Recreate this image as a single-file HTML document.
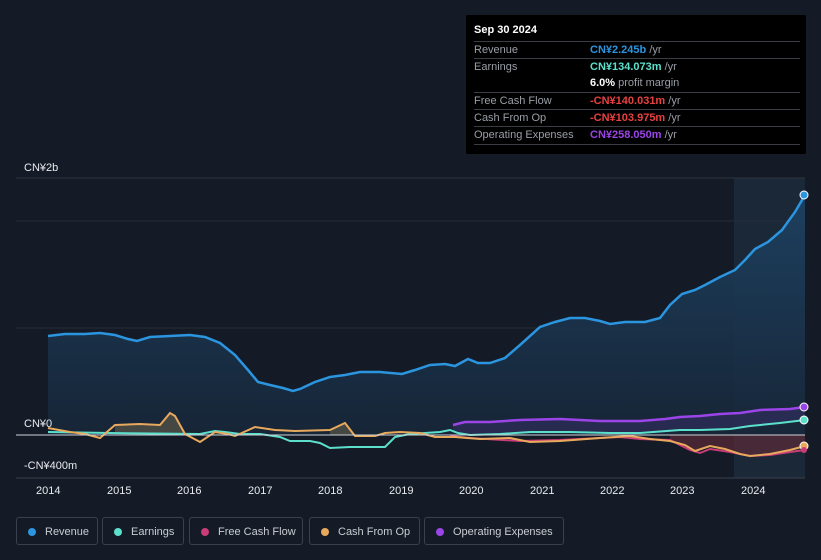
<!DOCTYPE html>
<html><head><meta charset="utf-8"><style>
body{margin:0;width:821px;height:560px;background:#151b26;font-family:"Liberation Sans","Noto Sans CJK SC",sans-serif;overflow:hidden;position:relative}
.tip{position:absolute;left:466px;top:15px;width:340px;height:139px;background:#000;border-radius:2px}
.tip .h{position:absolute;left:8px;top:9px;color:#fff;font-size:11px;font-weight:bold}
.row{position:absolute;left:8px;width:326px;border-top:1px solid #3a3d44;height:17px;font-size:11px;line-height:17px;color:#9a9ea6}
.row span{position:absolute;left:116px}
.leg{position:absolute;top:517px;height:28px;border:1px solid #3a404c;border-radius:3px;color:#c9ccd2;font-size:11px;line-height:28px;box-sizing:border-box;padding-left:28px}
.leg i{position:absolute;left:11px;top:10px;width:8px;height:8px;border-radius:50%}
.ax{position:absolute;color:#e8eaee;font-size:11px}
</style></head><body>
<svg width="821" height="560" style="position:absolute;left:0;top:0">
<defs><linearGradient id="g" x1="0" y1="0" x2="0" y2="1"><stop offset="0" stop-color="#1d4263"/><stop offset="1" stop-color="#172638"/></linearGradient></defs>
<rect x="734" y="178" width="71" height="300" fill="#1b2838"/>
<line x1="16" y1="178" x2="805" y2="178" stroke="#2e343f"/>
<line x1="16" y1="221" x2="805" y2="221" stroke="#262c37"/>
<line x1="16" y1="328" x2="805" y2="328" stroke="#262c37"/>
<path d="M48,336 L65,334 85,334 100,333 115,335 128,339 137,341 150,337 170,336 190,335 205,337 220,343 235,355 248,370 258,382 270,385 283,388 293,391 300,389 315,382 330,377 345,375 360,372 380,372 402,374 415,370 430,365 445,364 455,366 468,359 478,363 490,363 505,358 520,345 540,327 555,322 570,318 585,318 600,321 610,324 625,322 645,322 660,318 670,305 682,294 695,290 705,285 720,277 735,270 745,260 755,249 768,242 782,230 795,212 805,195 L805,435 L48,435Z" fill="url(#g)" opacity="0.9"/>
<path d="M48,336 L65,334 85,334 100,333 115,335 128,339 137,341 150,337 170,336 190,335 205,337 220,343 235,355 248,370 258,382 270,385 283,388 293,391 300,389 315,382 330,377 345,375 360,372 380,372 402,374 415,370 430,365 445,364 455,366 468,359 478,363 490,363 505,358 520,345 540,327 555,322 570,318 585,318 600,321 610,324 625,322 645,322 660,318 670,305 682,294 695,290 705,285 720,277 735,270 745,260 755,249 768,242 782,230 795,212 805,195" fill="none" stroke="#2b95e0" stroke-width="2.5"/>
<path d="M670,440 L685,445 695,451 710,446 725,449 740,454 750,456 770,454 790,450 805,446 L805,435 670,435Z" fill="#5a2a38" opacity="0.7"/>
<path d="M453,425 L465,422 490,422 520,420 560,419 600,421 640,421 665,419 680,417 700,416 720,414 740,413 760,410 790,409 805,407 L805,420 780,423 750,426 700,430 640,433 560,432 500,434 470,435 453,433Z" fill="#3a2f6a" opacity="0.5"/>
<path d="M115,425 L140,424 160,425 170,413 175,416 185,434 L115,434Z M330,430 L345,423 355,435 330,435Z" fill="#5a5548" opacity="0.7"/>
<path d="M453,425 L465,422 490,422 520,420 560,419 600,421 640,421 665,419 680,417 700,416 720,414 740,413 760,410 790,409 805,407" fill="none" stroke="#9b45e8" stroke-width="2.5"/>
<path d="M48,432 L110,433 200,434 215,431 225,432 240,434 260,434 280,437 290,441 310,441 320,443 330,448 350,447 385,447 395,437 410,434 440,432 450,430 458,433 470,435 500,434 530,432 570,432 610,433 640,433 680,430 700,430 730,429 750,426 780,423 805,420" fill="none" stroke="#5ce0cc" stroke-width="2"/>
<path d="M450,436 L470,438 520,441 560,440 580,439 620,437 640,439 670,440 690,450 700,453 710,449 730,452 750,456 770,455 790,452 805,450" fill="none" stroke="#c83c78" stroke-width="2"/>
<path d="M48,428 L70,432 85,434 100,438 115,425 140,424 160,425 170,413 175,416 185,434 200,442 215,432 228,434 235,436 255,427 275,430 295,431 330,430 345,423 355,436 375,436 385,433 400,432 420,433 435,437 455,437 480,439 510,438 530,442 560,441 600,438 630,436 650,439 670,441 685,445 695,451 710,446 725,449 740,454 750,456 770,454 790,450 805,446" fill="none" stroke="#e8a95c" stroke-width="2"/>
<line x1="16" y1="435" x2="805" y2="435" stroke="#d0d3d8" stroke-width="1"/>
<line x1="16" y1="478" x2="805" y2="478" stroke="#3a404c"/>
<circle cx="804" cy="195" r="4" fill="#2b95e0" stroke="#fff" stroke-width="1"/>
<circle cx="804" cy="407" r="4" fill="#9b45e8" stroke="#fff" stroke-width="1"/>
<circle cx="804" cy="420" r="4" fill="#5ce0cc" stroke="#fff" stroke-width="1"/>
<circle cx="804" cy="446" r="4" fill="#e8a95c" stroke="#fff" stroke-width="1"/>
<circle cx="804" cy="450" r="3" fill="#c83c78"/>
</svg>
<div class="ax" style="left:24px;top:162px">CN¥2b</div>
<div class="ax" style="left:24px;top:418px">CN¥0</div>
<div class="ax" style="left:24px;top:460px">-CN¥400m</div>
<div class="ax" style="left:36px;top:485px">2014</div><div class="ax" style="left:107px;top:485px">2015</div><div class="ax" style="left:177px;top:485px">2016</div><div class="ax" style="left:248px;top:485px">2017</div><div class="ax" style="left:318px;top:485px">2018</div><div class="ax" style="left:389px;top:485px">2019</div><div class="ax" style="left:459px;top:485px">2020</div><div class="ax" style="left:530px;top:485px">2021</div><div class="ax" style="left:600px;top:485px">2022</div><div class="ax" style="left:670px;top:485px">2023</div><div class="ax" style="left:741px;top:485px">2024</div>
<div class="tip">
<div class="h">Sep 30 2024</div>
<div class="row" style="top:26px">Revenue<span><b style="color:#2b95e0">CN¥2.245b</b> /yr</span></div>
<div class="row" style="top:43px">Earnings<span><b style="color:#5ce0cc">CN¥134.073m</b> /yr</span></div>
<div class="row" style="top:60px;border-top:none">&nbsp;<span><b style="color:#fff">6.0%</b> profit margin</span></div>
<div class="row" style="top:77px">Free Cash Flow<span><b style="color:#e84040">-CN¥140.031m</b> /yr</span></div>
<div class="row" style="top:94px">Cash From Op<span><b style="color:#e84040">-CN¥103.975m</b> /yr</span></div>
<div class="row" style="top:111px;border-bottom:1px solid #3a3d44">Operating Expenses<span><b style="color:#9b45e8">CN¥258.050m</b> /yr</span></div>
</div>
<div class="leg" style="left:16px;width:82px"><i style="background:#2b95e0"></i>Revenue</div>
<div class="leg" style="left:102px;width:82px"><i style="background:#5ce0cc"></i>Earnings</div>
<div class="leg" style="left:189px;width:114px"><i style="background:#c83c78"></i>Free Cash Flow</div>
<div class="leg" style="left:309px;width:111px"><i style="background:#e8a95c"></i>Cash From Op</div>
<div class="leg" style="left:424px;width:140px"><i style="background:#9b45e8"></i>Operating Expenses</div>
</body></html>
